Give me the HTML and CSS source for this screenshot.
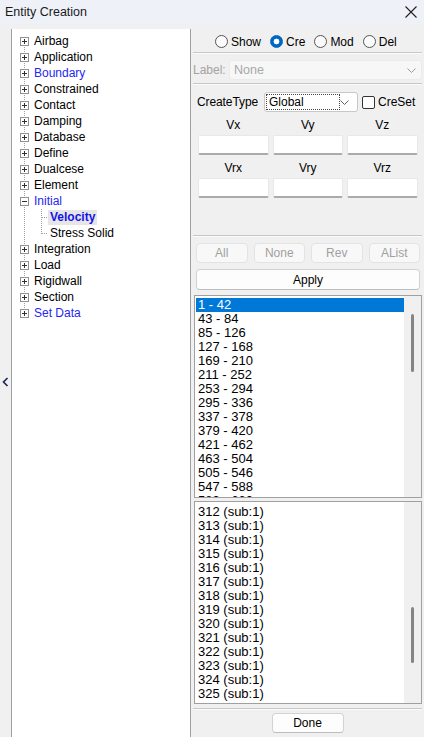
FILE: index.html
```html
<!DOCTYPE html>
<html>
<head>
<meta charset="utf-8">
<link rel="stylesheet" href="styles.css">
</head>
<body>
<div class="window">
  <div class="titlebar">
    <span class="title">Entity Creation</span>
    <svg class="close" width="12" height="12" viewBox="0 0 12 12"><path d="M0.5 0.5L11.5 11.5M11.5 0.5L0.5 11.5" stroke="#1f1f1f" stroke-width="1.1" fill="none"/></svg>
  </div>
  <div class="main">
    <div class="strip">
      <svg width="7" height="10" viewBox="0 0 7 10"><path d="M5.5 1L1.5 5L5.5 9" stroke="#1c2450" stroke-width="1.6" fill="none"/></svg>
    </div>
    <div class="tree">
      <div class="row first"><span class="box"></span><span>Airbag</span></div>
      <div class="row"><span class="box"></span><span>Application</span></div>
      <div class="row"><span class="box"></span><span class="blue">Boundary</span></div>
      <div class="row"><span class="box"></span><span>Constrained</span></div>
      <div class="row"><span class="box"></span><span>Contact</span></div>
      <div class="row"><span class="box"></span><span>Damping</span></div>
      <div class="row"><span class="box"></span><span>Database</span></div>
      <div class="row"><span class="box"></span><span>Define</span></div>
      <div class="row"><span class="box"></span><span>Dualcese</span></div>
      <div class="row"><span class="box"></span><span>Element</span></div>
      <div class="row"><span class="box minus"></span><span class="blue">Initial</span></div>
      <div class="row child"><span class="sel">Velocity</span></div>
      <div class="row child lastchild"><span class="plain">Stress Solid</span></div>
      <div class="row"><span class="box"></span><span>Integration</span></div>
      <div class="row"><span class="box"></span><span>Load</span></div>
      <div class="row"><span class="box"></span><span>Rigidwall</span></div>
      <div class="row"><span class="box"></span><span>Section</span></div>
      <div class="row last"><span class="box"></span><span class="blue">Set Data</span></div>
    </div>
    <div class="panel">
      <div class="radios">
        <div class="radio"><span class="dot"></span><span>Show</span></div>
        <div class="radio"><span class="dot on"></span><span>Cre</span></div>
        <div class="radio"><span class="dot"></span><span>Mod</span></div>
        <div class="radio"><span class="dot"></span><span>Del</span></div>
      </div>
      <div class="sep"></div>
      <div class="labelrow">
        <span class="labeltxt">Label:</span>
        <div class="combo dis"><span>None</span>
          <svg width="9" height="5" viewBox="0 0 9 5"><path d="M0.5 0.5L4.5 4.5L8.5 0.5" stroke="#9a9a9a" fill="none"/></svg>
        </div>
      </div>
      <div class="sep"></div>
      <div class="createrow">
        <span class="ctlabel">CreateType</span>
        <div class="combo white">
          <span class="focus">Global</span>
          <svg width="9" height="5" viewBox="0 0 9 5"><path d="M0.5 0.5L4.5 4.5L8.5 0.5" stroke="#606060" fill="none"/></svg>
        </div>
        <span class="check"></span><span class="checktxt">CreSet</span>
      </div>
      <div class="vgrid">
        <div class="cell"><span class="vl">Vx</span><span class="inp"></span></div>
        <div class="cell"><span class="vl">Vy</span><span class="inp"></span></div>
        <div class="cell"><span class="vl">Vz</span><span class="inp"></span></div>
        <div class="cell"><span class="vl">Vrx</span><span class="inp"></span></div>
        <div class="cell"><span class="vl">Vry</span><span class="inp"></span></div>
        <div class="cell"><span class="vl">Vrz</span><span class="inp"></span></div>
      </div>
      <div class="sep sep-low"></div>
      <div class="btns">
        <span class="btn">All</span>
        <span class="btn">None</span>
        <span class="btn">Rev</span>
        <span class="btn">AList</span>
      </div>
      <div class="apply">Apply</div>
      <div class="list list1">
        <div class="items">
          <div class="it on">1 - 42</div>
          <div class="it">43 - 84</div>
          <div class="it">85 - 126</div>
          <div class="it">127 - 168</div>
          <div class="it">169 - 210</div>
          <div class="it">211 - 252</div>
          <div class="it">253 - 294</div>
          <div class="it">295 - 336</div>
          <div class="it">337 - 378</div>
          <div class="it">379 - 420</div>
          <div class="it">421 - 462</div>
          <div class="it">463 - 504</div>
          <div class="it">505 - 546</div>
          <div class="it">547 - 588</div>
          <div class="it">589 - 630</div>
        </div>
        <div class="sbar"><span class="thumb t1"></span></div>
      </div>
      <div class="list list2">
        <div class="items">
          <div class="it">312 (sub:1)</div>
          <div class="it">313 (sub:1)</div>
          <div class="it">314 (sub:1)</div>
          <div class="it">315 (sub:1)</div>
          <div class="it">316 (sub:1)</div>
          <div class="it">317 (sub:1)</div>
          <div class="it">318 (sub:1)</div>
          <div class="it">319 (sub:1)</div>
          <div class="it">320 (sub:1)</div>
          <div class="it">321 (sub:1)</div>
          <div class="it">322 (sub:1)</div>
          <div class="it">323 (sub:1)</div>
          <div class="it">324 (sub:1)</div>
          <div class="it">325 (sub:1)</div>
          <div class="it">326 (sub:1)</div>
        </div>
        <div class="sbar"><span class="thumb t2"></span></div>
      </div>
      <div class="sep sep-bottom"></div>
      <div class="done">Done</div>
    </div>
  </div>
</div>
</body>
</html>
```
FILE: styles.css
```css
* { box-sizing: border-box; }
html, body { margin: 0; padding: 0; }
body {
  width: 424px;
  height: 737px;
  overflow: hidden;
  background: #f0f0f0;
  font: 12px "Liberation Sans", Arial, sans-serif;
  color: #000;
}
.window { height: 737px; display: flex; flex-direction: column; }

.titlebar {
  height: 24px;
  flex: none;
  background: #eef2f8;
  display: flex;
  align-items: center;
  justify-content: space-between;
  padding: 0 7px 0 5px;
  font-size: 12.5px;
  color: #1a1a1a;
}
.close { display: block; }

.main { flex: 1; display: flex; min-height: 0; }
.strip {
  width: 11px;
  flex: none;
  display: flex;
  align-items: center;
  justify-content: center;
  padding-top: 2px;
}

.tree {
  width: 180px;
  height: 720px;
  flex: none;
  margin-top: 5px;
  background: #fff;
  border-left: 1px solid #a0a0a0;
  border-right: 1px solid #a0a0a0;
  padding-top: 4px;
}
.row {
  height: 16px;
  display: flex;
  align-items: center;
  padding-left: 8px;
  white-space: nowrap;
  background: repeating-linear-gradient(to bottom, #a0a0a0 0 1px, transparent 1px 2px) 12px 0 / 1px 100% no-repeat;
}
.row.first { background-position: 12px 8px; background-size: 1px 8px; }
.row.last { background-size: 1px 8px; }
.row.child {
  padding-left: 36px;
  background:
    repeating-linear-gradient(to bottom, #a0a0a0 0 1px, transparent 1px 2px) 12px 0 / 1px 100% no-repeat,
    repeating-linear-gradient(to bottom, #a0a0a0 0 1px, transparent 1px 2px) 29px 0 / 1px 100% no-repeat,
    repeating-linear-gradient(to right, #a0a0a0 0 1px, transparent 1px 2px) 30px 8px / 6px 1px no-repeat;
}
.row.child.lastchild {
  background:
    repeating-linear-gradient(to bottom, #a0a0a0 0 1px, transparent 1px 2px) 12px 0 / 1px 100% no-repeat,
    repeating-linear-gradient(to bottom, #a0a0a0 0 1px, transparent 1px 2px) 29px 0 / 1px 9px no-repeat,
    repeating-linear-gradient(to right, #a0a0a0 0 1px, transparent 1px 2px) 30px 8px / 6px 1px no-repeat;
}
.box {
  width: 9px;
  height: 9px;
  margin-right: 5px;
  flex: none;
  border: 1px solid #919191;
  background:
    linear-gradient(#303030, #303030) center / 5px 1px no-repeat,
    linear-gradient(#303030, #303030) center / 1px 5px no-repeat,
    #fff;
}
.box.minus {
  background:
    linear-gradient(#303030, #303030) center / 5px 1px no-repeat,
    #fff;
}
.blue { color: #2626f2; }
.sel {
  font-weight: bold;
  color: #1414e6;
  background: #e6e6e6;
  padding: 0 2px;
  line-height: 15px;
  margin-top: 1px;
}
.plain { padding-left: 2px; }

.panel {
  width: 229px;
  flex: none;
  margin-left: 2px;
  padding-top: 7px;
  display: flex;
  flex-direction: column;
}

.radios {
  height: 21px;
  flex: none;
  display: flex;
  align-items: center;
  padding-left: 22px;
  gap: 9px;
}
.radio { display: flex; align-items: center; gap: 3px; }
.dot {
  width: 13px;
  height: 13px;
  border-radius: 50%;
  border: 1px solid #555;
  background: #fbfbfb;
}
.dot.on {
  border-color: #0067c0;
  background: radial-gradient(circle, #fff 0 2.6px, #0067c0 3.2px);
}

.sep {
  height: 2px;
  flex: none;
  border-top: 1px solid #c8c8c8;
  border-bottom: 1px solid #fbfbfb;
}
.sep-low { margin-top: 37px; }
.sep-bottom { margin-top: 4px; }

.labelrow {
  height: 29px;
  flex: none;
  display: flex;
  align-items: flex-start;
  padding-top: 6px;
}
.labeltxt { width: 36px; color: #a3a3a3; line-height: 20px; }
.combo {
  height: 20px;
  display: flex;
  align-items: center;
  justify-content: space-between;
  border-radius: 3px;
}
.combo.dis {
  width: 193px;
  background: #f7f7f7;
  border: 1px solid #ebebeb;
  color: #a8a8a8;
  padding: 0 5px 0 4px;
  font-size: 12.5px;
}

.createrow {
  flex: none;
  display: flex;
  align-items: center;
  padding-top: 7px;
}
.ctlabel { width: 71px; flex: none; padding-left: 4px; letter-spacing: -0.1px; }
.combo.white {
  width: 94px;
  flex: none;
  background: #fff;
  border: 1px solid #c8c8c8;
  padding: 1px 8px 1px 1px;
}
.focus {
  width: 74px;
  height: 16px;
  line-height: 14px;
  border: 1px dotted #444;
  padding-left: 2px;
}
.check {
  width: 13px;
  height: 13px;
  flex: none;
  margin-left: 4px;
  border: 1px solid #333;
  border-radius: 2px;
  background: #fff;
}
.checktxt { margin-left: 3px; }

.vgrid {
  display: grid;
  grid-template-columns: repeat(3, 70.5px);
  column-gap: 4px;
  row-gap: 6px;
  padding-left: 5px;
  margin-top: 6px;
  flex: none;
}
.cell { display: flex; flex-direction: column; align-items: center; }
.vl { height: 14px; line-height: 14px; }
.inp {
  margin-top: 3px;
  width: 100%;
  height: 20px;
  background: #fff;
  border: 1px solid #e8e8e8;
  border-bottom: 2px solid #ababab;
  border-radius: 2px;
}

.btns {
  display: grid;
  grid-template-columns: repeat(4, 1fr);
  gap: 6px;
  margin: 6px 0 0 3px;
  width: 224px;
  flex: none;
}
.btn {
  height: 20px;
  border: 1px solid #e3e3e3;
  border-radius: 4px;
  background: #f8f8f8;
  color: #a0a0a0;
  display: flex;
  align-items: center;
  justify-content: center;
}
.apply {
  margin: 6px 0 0 3px;
  width: 224px;
  height: 21px;
  flex: none;
  background: #fdfdfd;
  border: 1px solid #d2d2d2;
  border-bottom-color: #bdbdbd;
  border-radius: 4px;
  display: flex;
  align-items: center;
  justify-content: center;
}

.list {
  width: 228px;
  height: 203px;
  flex: none;
  margin-left: 1px;
  border: 1px solid #a0a0a0;
  background: #fff;
  display: flex;
  padding-left: 1px;
}
.list1 { margin-top: 5px; }
.list2 { margin-top: 3px; }
.items { flex: 1; overflow: hidden; font-size: 13px; }
.list1 .items { padding-top: 2px; }
.list2 .items { padding-top: 3px; }
.it {
  height: 14px;
  line-height: 14px;
  padding-left: 2px;
  white-space: nowrap;
}
.it.on { background: #0078d7; color: #fff; }
.sbar {
  width: 17px;
  flex: none;
  background: #f0f0f0;
  display: flex;
  flex-direction: column;
  align-items: flex-start;
}
.thumb {
  width: 3px;
  margin-left: 7px;
  border-radius: 2px;
  background: #858585;
}
.t1 { margin-top: 18px; height: 58px; }
.t2 { margin-top: 105px; height: 56px; }

.done {
  margin: 3px auto 0;
  width: 72px;
  height: 20px;
  flex: none;
  background: #fdfdfd;
  border: 1px solid #d2d2d2;
  border-bottom-color: #bdbdbd;
  border-radius: 4px;
  display: flex;
  align-items: center;
  justify-content: center;
}
```
